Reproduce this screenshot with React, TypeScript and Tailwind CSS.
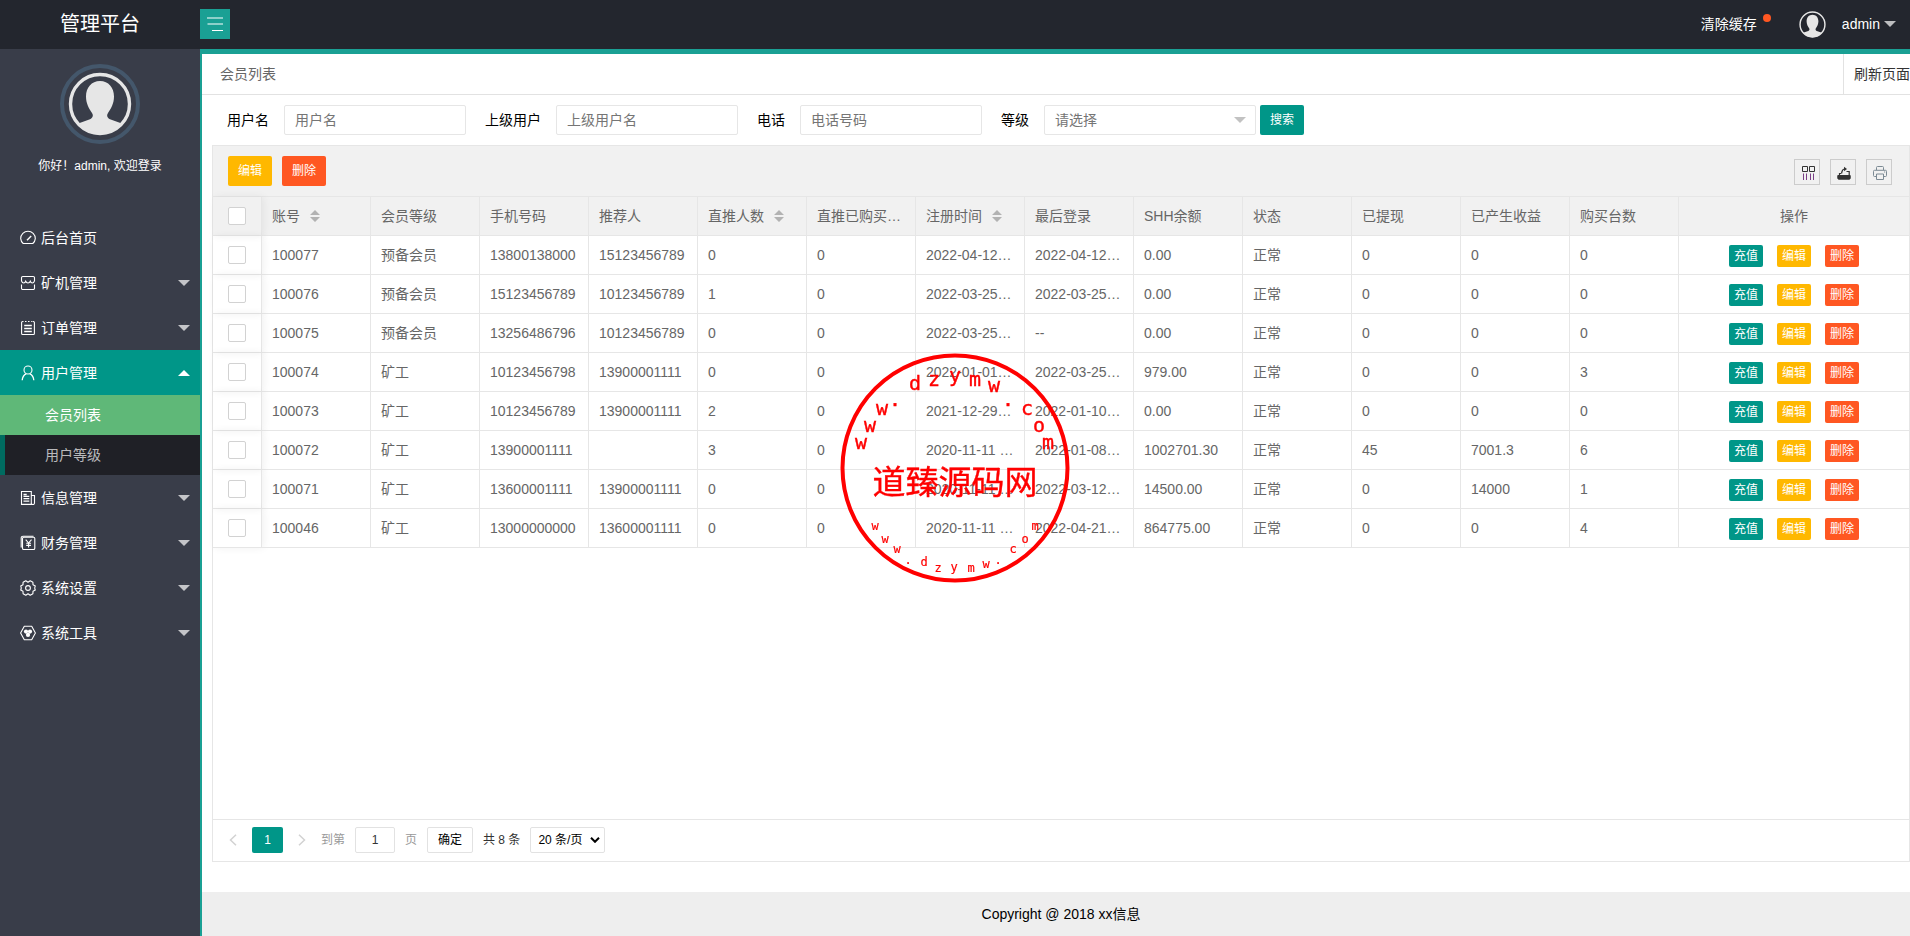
import { useState } from 'react';
import type { ReactNode } from 'react';
import clsx from 'clsx';

interface Member {
  id: string;
  level: string;
  phone: string;
  referrer: string;
  direct: number;
  bought: number;
  registered: string;
  lastLogin: string;
  balance: string;
  withdrawn: string;
  income: string;
  machines: number;
}

const MEMBERS: Member[] = [
  { id: '100077', level: '预备会员', phone: '13800138000', referrer: '15123456789', direct: 0, bought: 0, registered: '2022-04-12…', lastLogin: '2022-04-12…', balance: '0.00', withdrawn: '0', income: '0', machines: 0 },
  { id: '100076', level: '预备会员', phone: '15123456789', referrer: '10123456789', direct: 1, bought: 0, registered: '2022-03-25…', lastLogin: '2022-03-25…', balance: '0.00', withdrawn: '0', income: '0', machines: 0 },
  { id: '100075', level: '预备会员', phone: '13256486796', referrer: '10123456789', direct: 0, bought: 0, registered: '2022-03-25…', lastLogin: '--', balance: '0.00', withdrawn: '0', income: '0', machines: 0 },
  { id: '100074', level: '矿工', phone: '10123456798', referrer: '13900001111', direct: 0, bought: 0, registered: '2022-01-01…', lastLogin: '2022-03-25…', balance: '979.00', withdrawn: '0', income: '0', machines: 3 },
  { id: '100073', level: '矿工', phone: '10123456789', referrer: '13900001111', direct: 2, bought: 0, registered: '2021-12-29…', lastLogin: '2022-01-10…', balance: '0.00', withdrawn: '0', income: '0', machines: 0 },
  { id: '100072', level: '矿工', phone: '13900001111', referrer: '', direct: 3, bought: 0, registered: '2020-11-11 …', lastLogin: '2022-01-08…', balance: '1002701.30', withdrawn: '45', income: '7001.3', machines: 6 },
  { id: '100071', level: '矿工', phone: '13600001111', referrer: '13900001111', direct: 0, bought: 0, registered: '2020-11-11 …', lastLogin: '2022-03-12…', balance: '14500.00', withdrawn: '0', income: '14000', machines: 1 },
  { id: '100046', level: '矿工', phone: '13000000000', referrer: '13600001111', direct: 0, bought: 0, registered: '2020-11-11 …', lastLogin: '2022-04-21…', balance: '864775.00', withdrawn: '0', income: '0', machines: 4 },
];

const COLUMNS: { title: string; sortable?: boolean }[] = [
  { title: '账号', sortable: true },
  { title: '会员等级' },
  { title: '手机号码' },
  { title: '推荐人' },
  { title: '直推人数', sortable: true },
  { title: '直推已购买…' },
  { title: '注册时间', sortable: true },
  { title: '最后登录' },
  { title: 'SHH余额' },
  { title: '状态' },
  { title: '已提现' },
  { title: '已产生收益' },
  { title: '购买台数' },
];

function MenuIcon({ children }: { children: ReactNode }) {
  return (
    <svg viewBox="0 0 16 16" className="size-4 shrink-0" fill="none" stroke="currentColor" strokeWidth="1.1" aria-hidden>
      {children}
    </svg>
  );
}

const ICONS = {
  dashboard: (
    <MenuIcon>
      <path d="M3.2 13.5A7.2 7.2 0 0 1 .7 8.6a7.3 7.3 0 0 1 14.6 0 7.2 7.2 0 0 1-2.5 4.9Z" />
      <path d="M7 10.2 11.2 6" strokeWidth="1.4" />
    </MenuIcon>
  ),
  store: (
    <MenuIcon>
      <path d="M1.500 6V2.800a1.300 1.300 0 0 1 1.300-1.300h10.400a1.300 1.300 0 0 1 1.300 1.300V6M1.500 9.500v3.700a1.300 1.300 0 0 0 1.300 1.300h10.400a1.300 1.300 0 0 0 1.300-1.300V9.500" />
      <path d="M1.500 6c.5 1.300 1.300 2 2.200 2s1.600-.6 2-1.700C6.200 7.500 7 8 8 8s1.800-.5 2.300-1.700c.4 1.100 1.100 1.700 2 1.700s1.700-.7 2.200-2" />
    </MenuIcon>
  ),
  order: (
    <MenuIcon>
      <path d="M3.500 1.500h-.9a1 1 0 0 0-1 1v11a1 1 0 0 0 1 1h10.800a1 1 0 0 0 1-1v-11a1 1 0 0 0-1-1h-.9M5 1.500h1.500M8 1.500h1.500M11 1.500h.8" />
      <path d="M4.200 5.500h7.600M4.200 8.500h7.600M4.200 11.500h7.600" strokeWidth="1.300" />
    </MenuIcon>
  ),
  user: (
    <MenuIcon>
      <circle cx="8" cy="5" r="4" />
      <path d="M2.200 15.200c.3-3.200 1.900-5.400 4-6.300M13.800 15.200c-.3-3.200-1.900-5.400-4-6.300" strokeWidth="1.300" />
    </MenuIcon>
  ),
  news: (
    <MenuIcon>
      <path d="M1.500 1.500h9.800v12.900H1.500ZM11.300 5.500h3.200v7.400a1.500 1.500 0 0 1-3.200 0" />
      <path d="M3.500 4.500h3.200M3.500 6.300h5.800M3.500 8.700h5.800M3.500 11.200h5.800" strokeWidth="1.300" />
    </MenuIcon>
  ),
  finance: (
    <MenuIcon>
      <path d="M1.200 12.500V3a1.800 1.800 0 0 1 1.800-1.800h10.500" />
      <rect x="2.500" y="2.300" width="12.300" height="12.200" rx="1.300" />
      <path d="M5.700 4.600 8.600 8l2.900-3.400M8.600 8v4.600M6.200 8.300h4.800M6.200 10.400h4.800" />
    </MenuIcon>
  ),
  settings: (
    <MenuIcon>
      <path d="M5.800.7 8 2.200 10.200.7l2.700 1.500.1 2.500 2.300 1.300c-.7 1.300-.7 2.700 0 4L13 11.300l-.1 2.500-2.700 1.500L8 13.800l-2.200 1.500-2.700-1.500-.1-2.500L.7 10c.7-1.300.7-2.700 0-4L3 4.700l.1-2.500Z" strokeLinejoin="round" />
      <circle cx="8" cy="8" r="2.400" />
    </MenuIcon>
  ),
  tools: (
    <MenuIcon>
      <path d="M4.300 1.300h7.400L15.400 8l-3.700 6.700H4.300L.6 8Z" strokeLinejoin="round" />
      <g fill="currentColor" stroke="none">
        <circle cx="6" cy="6.600" r="2.100" />
        <circle cx="10" cy="6.600" r="2.100" />
        <circle cx="8" cy="9.900" r="2.100" />
      </g>
    </MenuIcon>
  ),
};

const MENU: { label: string; icon: ReactNode; children?: string[]; leaf?: boolean }[] = [
  { label: '后台首页', icon: ICONS.dashboard, leaf: true },
  { label: '矿机管理', icon: ICONS.store },
  { label: '订单管理', icon: ICONS.order },
  { label: '用户管理', icon: ICONS.user, children: ['会员列表', '用户等级'] },
  { label: '信息管理', icon: ICONS.news },
  { label: '财务管理', icon: ICONS.finance },
  { label: '系统设置', icon: ICONS.settings },
  { label: '系统工具', icon: ICONS.tools },
];

function Caret({ up, className }: { up?: boolean; className?: string }) {
  return (
    <svg viewBox="0 0 12 6" className={clsx('h-[6px] w-3 shrink-0', className)} fill="currentColor" aria-hidden>
      <path d={up ? 'M0 6 6 0l6 6Z' : 'M0 0h12L6 6Z'} />
    </svg>
  );
}

function Avatar({ className }: { className?: string }) {
  return (
    <svg viewBox="0 0 64 64" className={className} aria-hidden>
      <circle cx="32" cy="32" r="29.500" fill="none" stroke="#e6e6e6" strokeWidth="3.400" />
      <path
        d="M32 9c8.500 0 14 6.500 14 15.500 0 7-3 12-6 16.500-1.600 2.400-.8 5 2 6.200l12.500 4.500A30 30 0 0 1 32 62.500 30 30 0 0 1 9.500 51.700L22 47.200c2.800-1.200 3.600-3.800 2-6.200-3-4.500-6-9.500-6-16.500C18 15.500 23.500 9 32 9Z"
        fill="#e6e6e6"
      />
    </svg>
  );
}

function Header() {
  return (
    <header className="flex h-[49px] items-center bg-[#23262e] pb-px text-sm text-white">
      <h1 className="w-[200px] text-center text-xl">管理平台</h1>
      <button type="button" aria-label="菜单" className="flex size-[30px] items-center justify-center bg-[#1aa094]">
        <svg viewBox="0 0 16 16" className="size-4" stroke="#fff" strokeWidth="1.200" aria-hidden>
          <path d="M0 2h16M.5 8h15.500M5 14.500h11" />
        </svg>
      </button>
      <div className="ml-auto flex items-center pr-[14px]">
        <a href="#" className="relative mr-[42px]">
          清除缓存
          <span className="absolute top-0 -right-[14px] size-2 rounded-full bg-[#ff5722]" />
        </a>
        <a href="#" className="flex items-center">
          <Avatar className="mr-4 size-[27px]" />
          admin
          <Caret className="ml-1 text-white/70" />
        </a>
      </div>
    </header>
  );
}

function Sidebar() {
  const [page, setPage] = useState('会员列表');
  return (
    <aside className="w-[200px] shrink-0 bg-[#393d49] pt-[15px] text-white">
      <div className="mx-auto flex size-20 items-center justify-center rounded-full border-4 border-[#44576b]">
        <Avatar className="size-16" />
      </div>
      <p className="mt-3 mb-[39px] text-center text-xs leading-5">你好！admin, 欢迎登录</p>
      <nav className="text-sm">
        {MENU.map((item) => (
          <div key={item.label}>
            <a
              href="#"
              className={clsx('flex h-[45px] items-center gap-[5px] pr-2.5 pl-5', item.children && 'bg-[#009688]')}
            >
              {item.icon}
              {item.label}
              {!item.leaf && <Caret up={!!item.children} className={clsx('ml-auto', !item.children && 'text-white/70')} />}
            </a>
            {item.children?.map((label) => (
              <a
                key={label}
                href="#"
                onClick={() => setPage(label)}
                className={clsx(
                  'flex h-10 items-center border-l-[5px] pl-10',
                  page === label
                    ? 'border-[#5fb878] bg-[#5fb878] text-white'
                    : 'border-[#006b60] bg-[#1f2026] text-white/70',
                )}
              >
                {label}
              </a>
            ))}
          </div>
        ))}
      </nav>
    </aside>
  );
}

function SearchField({ id, label, placeholder }: { id: string; label: string; placeholder: string }) {
  return (
    <>
      <label htmlFor={id} className="px-[15px] text-black">
        {label}
      </label>
      <input
        id={id}
        placeholder={placeholder}
        className="mr-1 h-[30px] w-[182px] rounded-xs border border-[#e6e6e6] px-2.5 outline-none placeholder:text-[#757575]"
      />
    </>
  );
}

function SearchBar() {
  return (
    <form className="flex items-center px-2.5 py-2.5" onSubmit={(e) => e.preventDefault()}>
      <SearchField id="username" label="用户名" placeholder="用户名" />
      <SearchField id="parent" label="上级用户" placeholder="上级用户名" />
      <SearchField id="phone" label="电话" placeholder="电话号码" />
      <label htmlFor="level" className="px-[15px] text-black">
        等级
      </label>
      <div className="relative mr-1 w-[212px]">
        <select
          id="level"
          className="h-[30px] w-full appearance-none rounded-xs border border-[#e6e6e6] bg-white px-2.5 text-[#757575] outline-none"
        >
          <option>请选择</option>
        </select>
        <Caret className="pointer-events-none absolute top-3 right-2.5 text-[#c2c2c2]" />
      </div>
      <button type="submit" className="h-[30px] rounded-xs bg-[#009688] px-2.5 text-xs text-white">
        搜索
      </button>
    </form>
  );
}

function ToolButton({ label, children }: { label: string; children: ReactNode }) {
  return (
    <button type="button" aria-label={label} className="flex size-[26px] items-center justify-center border border-[#ccc] pt-px pl-0.5 text-[#333]">
      {children}
    </button>
  );
}

function Toolbar() {
  return (
    <div className="flex h-[51px] items-center border-b border-[#e6e6e6] bg-[#f1f1f1] pr-[17px] pl-[15px]">
      <button type="button" className="mr-2.5 h-[30px] rounded-xs bg-[#ffb800] px-2.5 text-xs text-white">
        编辑
      </button>
      <button type="button" className="h-[30px] rounded-xs bg-[#ff5722] px-2.5 text-xs text-white">
        删除
      </button>
      <div className="ml-auto flex gap-2.5 pt-0.5">
        <ToolButton label="筛选列">
          <svg viewBox="0 0 14 14" className="size-[14px]" fill="none" stroke="currentColor" aria-hidden>
            <path d="M1.500 .5h5v5h-5ZM8.500 .5h5v5h-5Z" />
            <path d="M2.500 7.500V14M5.500 7.500V14M9.500 7.500V14M12.500 7.500V14" stroke="#7a3f86" />
          </svg>
        </ToolButton>
        <ToolButton label="导出">
          <svg viewBox="0 0 14 14" className="size-[14px]" fill="none" stroke="currentColor" aria-hidden>
            <path d="M.8 9.500h12.400v2.700a1 1 0 0 1-1 1H1.800a1 1 0 0 1-1-1Z" fill="currentColor" />
            <path d="M2.500 9V7.500H4M9.500 5.500h2.700V9M4.500 7.500l.5-2c.4-1.700 1.300-2.500 3-2.500" strokeWidth="1.200" />
            <path d="m7 .8 3 2.200L7 5.200Z" fill="currentColor" stroke="none" />
          </svg>
        </ToolButton>
        <ToolButton label="打印">
          <svg viewBox="0 0 14 14" className="size-[14px] text-[#7c8a94]" fill="none" stroke="currentColor" aria-hidden>
            <path d="M3.500 4V1.500a1 1 0 0 1 1-1h5a1 1 0 0 1 1 1V4" />
            <path d="M3.500 10.500h-2a1 1 0 0 1-1-1V5.300a1 1 0 0 1 1-1h11a1 1 0 0 1 1 1v4.200a1 1 0 0 1-1 1h-2" />
            <path d="M3.500 8h7v5.500h-7ZM11 6h1.200" />
          </svg>
        </ToolButton>
      </div>
    </div>
  );
}

function CheckCell({ label }: { label: string }) {
  return (
    <input
      type="checkbox"
      aria-label={label}
      className="mx-auto block size-[18px] appearance-none rounded-xs border border-[#d2d2d2] bg-white checked:bg-[#5fb878]"
    />
  );
}

const CELL = 'h-[39px] truncate border-r border-b border-[#e6e6e6] px-2.5 text-left font-normal';
const CHECK_CELL = 'h-[39px] border-r border-b border-[#e6e6e6] shadow-[2px_0_8px_rgba(0,0,0,0.06)]';
const ACTION = 'h-[22px] rounded-xs px-[5px] text-xs text-white';

function MemberTable() {
  return (
    <table className="w-full table-fixed border-separate border-spacing-0">
      <colgroup>
        <col className="w-[49px]" />
        {COLUMNS.map((column) => (
          <col key={column.title} className="w-[109px]" />
        ))}
        <col />
      </colgroup>
      <thead>
        <tr className="bg-[#f1f1f1]">
          <th className={CHECK_CELL}>
            <CheckCell label="全选" />
          </th>
          {COLUMNS.map((column) => (
            <th key={column.title} className={CELL}>
              {column.title}
              {column.sortable && (
                <svg viewBox="0 0 10 12" className="ml-2.5 inline h-3 w-2.5 align-[-1px] text-[#b2b2b2]" fill="currentColor" aria-hidden>
                  <path d="M0 5 5 0l5 5ZM0 7h10l-5 5Z" />
                </svg>
              )}
            </th>
          ))}
          <th className="border-b border-[#e6e6e6] font-normal">操作</th>
        </tr>
      </thead>
      <tbody>
        {MEMBERS.map((m) => (
          <tr key={m.id}>
            <td className={CHECK_CELL}>
              <CheckCell label={m.id} />
            </td>
            <td className={CELL}>{m.id}</td>
            <td className={CELL}>{m.level}</td>
            <td className={CELL}>{m.phone}</td>
            <td className={CELL}>{m.referrer}</td>
            <td className={CELL}>{m.direct}</td>
            <td className={CELL}>{m.bought}</td>
            <td className={CELL}>{m.registered}</td>
            <td className={CELL}>{m.lastLogin}</td>
            <td className={CELL}>{m.balance}</td>
            <td className={CELL}>正常</td>
            <td className={CELL}>{m.withdrawn}</td>
            <td className={CELL}>{m.income}</td>
            <td className={CELL}>{m.machines}</td>
            <td className="border-b border-[#e6e6e6]">
              <div className="flex justify-center gap-[14px] pt-px">
                <button type="button" className={clsx(ACTION, 'bg-[#009688]')}>充值</button>
                <button type="button" className={clsx(ACTION, 'bg-[#ffb800]')}>编辑</button>
                <button type="button" className={clsx(ACTION, 'bg-[#ff5722]')}>删除</button>
              </div>
            </td>
          </tr>
        ))}
      </tbody>
    </table>
  );
}

function PageArrow({ label, d }: { label: string; d: string }) {
  return (
    <button type="button" aria-label={label} className="text-[#d2d2d2]">
      <svg viewBox="0 0 8 12" className="h-3 w-2" fill="none" stroke="currentColor" strokeWidth="1.500" aria-hidden>
        <path d={d} />
      </svg>
    </button>
  );
}

function Pagination() {
  return (
    <div className="flex h-[42px] items-center border-t border-[#e6e6e6] pb-px pl-4 text-xs text-[#333]">
      <PageArrow label="上一页" d="M7 .7 1.500 6 7 11.300" />
      <button type="button" className="mx-[15px] h-[26px] w-[31px] rounded-xs bg-[#009688] text-white">
        1
      </button>
      <PageArrow label="下一页" d="M1 .7 6.500 6 1 11.300" />
      <label htmlFor="page" className="mr-2.5 ml-[15px] text-[#999]">
        到第
      </label>
      <input id="page" defaultValue="1" className="h-[26px] w-10 rounded-xs border border-[#e2e2e2] text-center outline-none" />
      <span className="mx-2.5 text-[#999]">页</span>
      <button type="button" className="h-[26px] w-[46px] rounded-xs border border-[#e2e2e2] text-black">
        确定
      </button>
      <span className="mx-2.5">共 8 条</span>
      <div className="relative">
        <select
          aria-label="每页条数"
          className="h-[26px] w-[75px] appearance-none rounded-xs border border-[#e2e2e2] bg-white pl-[7px] text-black outline-none"
        >
          <option>20 条/页</option>
        </select>
        <svg viewBox="0 0 10 6" className="pointer-events-none absolute top-2.5 right-[5px] h-[6px] w-2.5" fill="none" stroke="#000" strokeWidth="2" aria-hidden>
          <path d="m1 .8 4 4 4-4" />
        </svg>
      </div>
    </div>
  );
}

type Glyph = [char: string, x: number, y: number];

const SEAL_TOP: Glyph[] = [
  ['w', 20, 95], ['w', 29, 78], ['w', 41, 61], ['.', 54, 52], ['d', 74, 36], ['z', 93, 32], ['y', 114, 28],
  ['m', 134, 32], ['w', 153, 38], ['.', 167, 52], ['c', 186, 61], ['o', 198, 78], ['m', 207, 95],
];
const SEAL_BOTTOM: Glyph[] = [
  ['w', 34, 176], ['w', 44, 189], ['w', 56, 199], ['.', 67, 210], ['d', 83, 212], ['z', 97, 218], ['y', 113, 217],
  ['m', 130, 218], ['w', 145, 214], ['.', 157, 210], ['c', 172, 199], ['o', 184, 189], ['m', 194, 176],
];

function Seal() {
  return (
    <div className="pointer-events-none fixed inset-0 flex items-center justify-center">
      <svg viewBox="-1 -1 230 230" className="size-[230px]" fill="#f00" stroke="#f00" textAnchor="middle" aria-hidden>
        <circle cx="114" cy="114" r="112.500" fill="none" strokeWidth="4" />
        <g strokeWidth="0.400" className="[font-family:'DejaVu_Sans_Mono',monospace] text-[20px]">
          {SEAL_TOP.map(([char, x, y]) => (
            <text key={x} x={x} y={y}>{char}</text>
          ))}
        </g>
        <text x="114" y="140" strokeWidth="0.400" className="[font-family:'Noto_Sans_CJK_SC',sans-serif] text-[33px]">道臻源码网</text>
        <g strokeWidth="0.200" className="[font-family:'DejaVu_Sans_Mono',monospace] text-[12px]">
          {SEAL_BOTTOM.map(([char, x, y]) => (
            <text key={x} x={x} y={y}>{char}</text>
          ))}
        </g>
      </svg>
    </div>
  );
}

export default function App() {
  return (
    <div className="flex min-h-screen flex-col bg-white text-sm [font-family:'Liberation_Sans','Noto_Sans_CJK_SC',sans-serif]">
      <Header />
      <div className="flex flex-1">
        <Sidebar />
        <div className="flex min-w-0 flex-1 flex-col border-t-[5px] border-l-2 border-[#1aa094]">
          <div className="flex h-[41px] items-stretch border-b border-[#e2e2e2]">
            <h2 className="flex items-center pl-[18px] text-[#666]">会员列表</h2>
            <button type="button" className="ml-auto border-l border-[#e2e2e2] pl-2.5 text-[#333]">
              刷新页面
            </button>
          </div>
          <main className="flex flex-1 flex-col text-[#666]">
            <SearchBar />
            <section className="mb-[30px] ml-2.5 flex flex-1 flex-col border border-[#e6e6e6]">
              <Toolbar />
              <div className="flex-1">
                <MemberTable />
              </div>
              <Pagination />
            </section>
          </main>
          <footer className="flex h-11 items-center justify-center bg-[#eee] pl-2.5 text-black">Copyright @ 2018 xx信息</footer>
        </div>
      </div>
      <Seal />
    </div>
  );
}
